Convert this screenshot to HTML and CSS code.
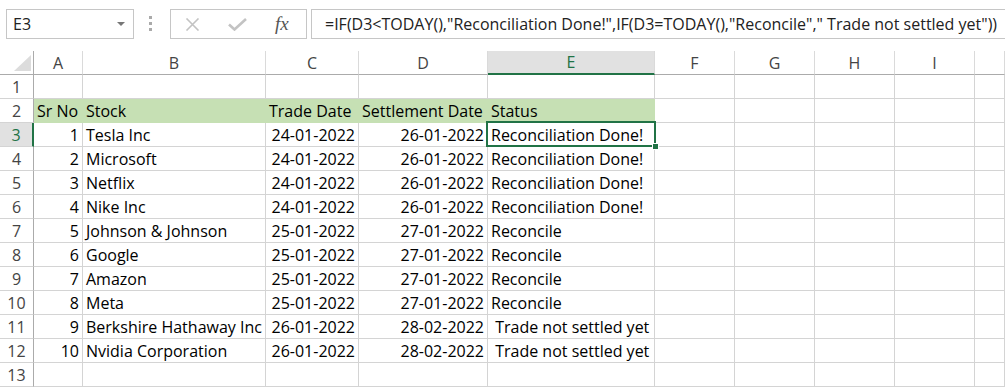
FILE: index.html
```html
<!DOCTYPE html>
<html lang="en">
<head>
  <meta charset="UTF-8" />
  <title>Reconciliation status</title>
  <link rel="stylesheet" href="styles.css">
</head>
<body>
<div class="formula-bar">
  <div class="name-box"><span>E3</span><span class="arrow"></span></div>
  <div class="grip"><span></span><span></span><span></span></div>
  <div class="fn-box">
    <svg class="ico-x" width="15" height="13" viewBox="0 0 15 13"><path d="M1.5 0.5 L13.5 12.5 M13.5 0.5 L1.5 12.5" stroke="#c3c3c3" stroke-width="1.6" fill="none"/></svg>
    <svg class="ico-ok" width="19" height="13" viewBox="0 0 19 13"><path d="M1 6.5 L6.5 11.5 L18 1" stroke="#c3c3c3" stroke-width="2.6" fill="none"/></svg>
    <span class="fx">fx</span>
  </div>
  <div class="formula">=IF(D3&lt;TODAY(),"Reconciliation Done!",IF(D3=TODAY(),"Reconcile"," Trade not settled yet"))</div>
</div>

<div class="sheet" id="sheet"></div>

<script>
const cols = ['A', 'B', 'C', 'D', 'E', 'F', 'G', 'H', 'I', ''];
const rows = [
  [],
  ['Sr No', 'Stock', 'Trade Date', 'Settlement Date', 'Status'],
  [1, 'Tesla Inc', '24-01-2022', '26-01-2022', 'Reconciliation Done!'],
  [2, 'Microsoft', '24-01-2022', '26-01-2022', 'Reconciliation Done!'],
  [3, 'Netflix', '24-01-2022', '26-01-2022', 'Reconciliation Done!'],
  [4, 'Nike Inc', '24-01-2022', '26-01-2022', 'Reconciliation Done!'],
  [5, 'Johnson & Johnson', '25-01-2022', '27-01-2022', 'Reconcile'],
  [6, 'Google', '25-01-2022', '27-01-2022', 'Reconcile'],
  [7, 'Amazon', '25-01-2022', '27-01-2022', 'Reconcile'],
  [8, 'Meta', '25-01-2022', '27-01-2022', 'Reconcile'],
  [9, 'Berkshire Hathaway Inc', '26-01-2022', '28-02-2022', ' Trade not settled yet'],
  [10, 'Nvidia Corporation', '26-01-2022', '28-02-2022', ' Trade not settled yet'],
  []
];

const sheet = document.getElementById('sheet');

function addCell(cls, text) {
  const div = document.createElement('div');
  div.className = 'cell ' + cls;
  div.textContent = text;
  sheet.appendChild(div);
  return div;
}

addCell('corner', '').innerHTML = '<svg width="17" height="16" viewBox="0 0 17 16"><polygon points="17,0 17,16 0,16" fill="#dcdcdc"/></svg>';
cols.forEach(c => addCell(c === 'E' ? 'col-head sel-col' : 'col-head', c));

rows.forEach((row, i) => {
  const r = i + 1;
  addCell(r === 3 ? 'row-head sel-row' : 'row-head', r);
  cols.forEach((c, j) => {
    const val = row[j] === undefined ? '' : row[j];
    let cls = '';
    if (r === 2 && j < 5) cls += ' fill';
    if (r > 2 && (j === 0 || j === 2 || j === 3)) cls += ' num';
    if (r === 3 && c === 'E') cls += ' active';
    addCell(cls, val);
  });
});
</script>
</body>
</html>
```

FILE: styles.css
```css
body {
  margin: 0;
  background: #fff;
  font-family: "Open Sans", sans-serif;
  overflow: hidden;
}
.formula-bar {
  display: flex;
  align-items: flex-start;
  height: 51px;
  padding: 9px 0 0 6px;
  box-sizing: border-box;
}
.name-box {
  width: 128px;
  height: 30px;
  border: 1px solid #c6c6c6;
  box-sizing: border-box;
  display: flex;
  align-items: center;
  justify-content: space-between;
  padding: 0 8px 0 6px;
  font-size: 16px;
  color: #222;
}
.arrow {
  width: 0;
  height: 0;
  border-left: 4px solid transparent;
  border-right: 4px solid transparent;
  border-top: 4px solid #777;
}
.grip {
  width: 3px;
  margin: 7px 18px 0 15px;
  display: flex;
  flex-direction: column;
  gap: 3px;
}
.grip span {
  width: 3px;
  height: 3px;
  background: #aaa;
}
.fn-box {
  width: 137px;
  height: 30px;
  border: 1px solid #c6c6c6;
  box-sizing: border-box;
  display: flex;
  align-items: center;
}
.ico-x {
  margin-left: 14px;
}
.ico-ok {
  margin-left: 28px;
}
.fx {
  margin-left: 28px;
  font-family: "Liberation Serif", serif;
  font-style: italic;
  font-size: 19px;
  color: #555;
}
.formula {
  flex: 1;
  margin: 0 -10px 0 4px;
  height: 30px;
  border: 1px solid #c6c6c6;
  box-sizing: border-box;
  padding-left: 13px;
  display: flex;
  align-items: center;
  font-size: 16px;
  color: #222;
  white-space: pre;
  overflow: hidden;
}
.sheet {
  display: grid;
  grid-template-columns: 34px 49px 183px 93px 129px 167px 80px 80px 80px 80px 1fr;
  grid-auto-rows: 24px;
}
.cell {
  border-right: 1px solid #d4d4d4;
  border-bottom: 1px solid #d4d4d4;
  box-sizing: border-box;
  padding: 0 3px 1px;
  display: flex;
  align-items: flex-end;
  font-size: 16px;
  line-height: 20px;
  color: #000;
  white-space: pre;
}
.num {
  justify-content: flex-end;
}
.corner {
  border-right-color: #ababab;
  border-bottom-color: #ababab;
  padding: 0 2px 3px 0;
  justify-content: flex-end;
}
.col-head {
  justify-content: center;
  color: #444;
  border-right-color: #dadada;
  border-bottom-color: #ababab;
}
.row-head {
  justify-content: center;
  color: #444;
  border-right-color: #ababab;
}
.fill {
  background: #c6e0b4;
  border-right-color: #c6e0b4;
  border-bottom-color: #c6e0b4;
}
.sel-col {
  background: #e1e1e1;
  color: #217346;
  border-bottom: 2px solid #217346;
}
.sel-row {
  background: #e1e1e1;
  color: #217346;
  border-right: 2px solid #217346;
}
.active {
  position: relative;
}
.active::before {
  content: "";
  position: absolute;
  left: -2px;
  top: -2px;
  width: 170px;
  height: 26px;
  border: 2px solid #217346;
  box-sizing: border-box;
}
.active::after {
  content: "";
  position: absolute;
  left: 164px;
  top: 20px;
  width: 7px;
  height: 7px;
  background: #217346;
  border: 1px solid #fff;
  box-sizing: border-box;
}
```
